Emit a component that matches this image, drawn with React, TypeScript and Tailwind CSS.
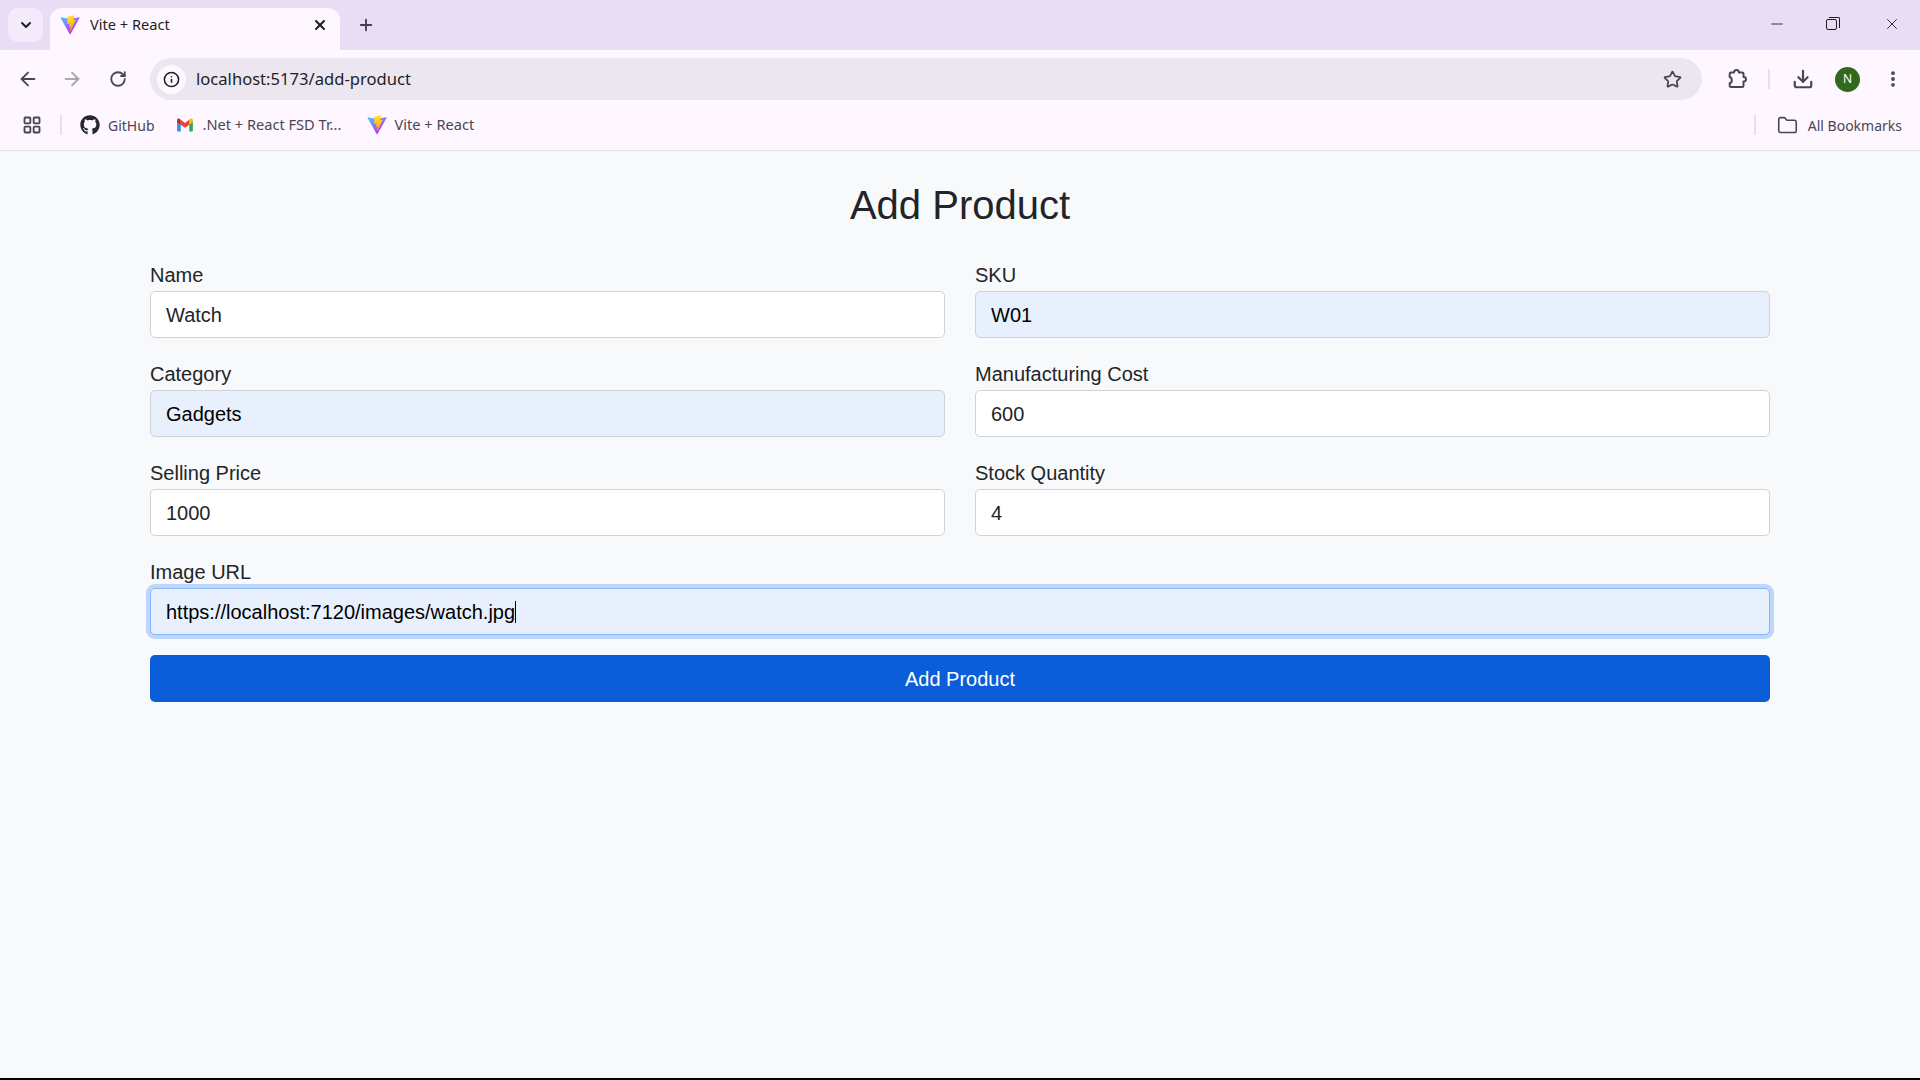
import React from "react";
import { ArrowLeft, ArrowRight, ChevronDown, Download, Folder, Info, LayoutGrid, Minus, MoreVertical, Plus, RotateCw, Star, X } from "lucide-react";
import { FaGithub } from "react-icons/fa";

const ViteLogo = ({ id }: { id: string }) => (
  <svg width="20" height="20" viewBox="0 0 410 404" fill="none">
    <path d="M399.6 59.5 215.9 388.2c-3.8 6.8-13.5 6.8-17.4.1L11.2 59.5c-4.2-7.4 2.1-16.3 10.4-14.8l183.9 32.9c1.2.2 2.4.2 3.5 0l180-32.8c8.3-1.5 14.7 7.3 10.6 14.7Z" fill={`url(#${id}a)`} />
    <path d="M292.9 1.6 156.9 28.2c-2.2.4-3.9 2.3-4 4.6l-8.4 141.1c-.2 3.3 2.9 5.9 6.1 5.1l37.9-8.7c3.5-.8 6.7 2.3 6 5.9l-11.3 55.1c-.8 3.7 2.7 6.9 6.3 5.8l23.4-7.1c3.6-1.1 7.1 2.1 6.3 5.8l-17.9 86.5c-1.1 5.4 6.1 8.4 9.1 3.7l2-3.1 110.9-221.3c1.9-3.7-1.3-7.9-5.4-7.1l-39 7.5c-3.7.7-6.8-2.7-5.7-6.3l25.4-88.2c1.1-3.6-2.1-7-5.8-6.3Z" fill={`url(#${id}b)`} />
    <defs>
      <linearGradient id={`${id}a`} x1="6" y1="33" x2="235" y2="344" gradientUnits="userSpaceOnUse">
        <stop stopColor="#41D1FF" />
        <stop offset="1" stopColor="#BD34FE" />
      </linearGradient>
      <linearGradient id={`${id}b`} x1="194" y1="8" x2="236" y2="293" gradientUnits="userSpaceOnUse">
        <stop stopColor="#FFEA83" />
        <stop offset=".08" stopColor="#FFDD35" />
        <stop offset="1" stopColor="#FFA800" />
      </linearGradient>
    </defs>
  </svg>
);

const GmailLogo = () => (
  <svg width="18" height="18" viewBox="0 0 24 24">
    <path d="M1.5 5.6v13.7c0 .7.6 1.2 1.2 1.2h3.6v-9l-4.8-5.9Z" fill="#4285F4" />
    <path d="M22.5 5.6v13.7c0 .7-.6 1.2-1.2 1.2h-3.6v-9l4.8-5.9Z" fill="#34A853" />
    <path d="M17.7 4.9v6.6l4.8-3.6V5.4c0-2-2.3-3.1-3.8-1.3l-1 .8Z" fill="#FBBC04" />
    <path d="M6.3 11.5V4.9L12 9.2l5.7-4.3v6.6L12 15.8l-5.7-4.3Z" fill="#EA4335" />
    <path d="M1.5 5.4v2.5l4.8 3.6V4.9l-1-.8C3.8 2.3 1.5 3.4 1.5 5.4Z" fill="#C5221F" />
  </svg>
);

// chrome's extension icon, lucide's puzzle has too many bumps
const ExtensionIcon = () => (
  <svg className="ml-[24px] w-[22px] h-[22px]" viewBox="0 0 22 22" fill="none" stroke="currentColor" strokeWidth="2" strokeLinejoin="round">
    <path d="M8 4.5c0-1.500 1-2.500 2.500-2.500S13 3 13 4.500h3.200c.8 0 1.300.5 1.300 1.300V9c1.600 0 2.500 1 2.500 2.200s-.9 2.200-2.500 2.200v4.300c0 .8-.5 1.300-1.300 1.300H5c-.8 0-1.300-.5-1.300-1.300v-2.500c1.400-.3 2.100-1.300 2.100-2.800S5.100 9.300 3.700 9V5.800c0-.8.500-1.300 1.300-1.300h3Z" />
  </svg>
);

const fields = [
  { label: "Name", value: "Watch", filled: false },
  { label: "SKU", value: "W01", filled: true },
  { label: "Category", value: "Gadgets", filled: true },
  { label: "Manufacturing Cost", value: "600", filled: false },
  { label: "Selling Price", value: "1000", filled: false },
  { label: "Stock Quantity", value: "4", filled: false },
];

const App = () => {
  return (
    <div className="h-[1080px] w-[1920px] flex flex-col overflow-hidden bg-[#f8f9fa] font-['Liberation_Sans',Arial,sans-serif] text-[#212529]">
      {/* Tab strip */}
      <div className="h-[50px] flex bg-[#e9ddf5] text-[#1f1f1f] shrink-0">
        <div className="ml-[8px] mt-[8px] w-[35px] h-[34px] rounded-[10px] bg-[#f3ebfb] flex items-center justify-center">
          <ChevronDown className="w-[16px] h-[16px]" strokeWidth={3} />
        </div>
        <div className="relative ml-[7px] mt-[8px] w-[290px] h-[42px] rounded-t-[12px] bg-[#fef7ff] flex items-center pl-[10px] pb-[8px]">
          <ViteLogo id="tab" />
          <span className="ml-[10px] text-[14.6px] font-['Noto_Sans',sans-serif]">Vite + React</span>
          <X className="absolute left-[262px] top-[9px] w-[16px] h-[16px]" strokeWidth={3} />
        </div>
        <div className="ml-[17px] mt-[16px] w-[18px] h-[18px]">
          <Plus className="w-[18px] h-[18px] text-[#45404e]" strokeWidth={2.5} />
        </div>
        <div className="ml-auto flex mt-[15px] h-[18px]">
          <div className="w-[18px] mr-[40px]"><Minus className="w-[18px] h-[18px]" strokeWidth={1.2} /></div>
          <div className="relative w-[14px] h-[14px] mr-[43px] mt-[2px]">
            <div className="absolute left-0 top-[2px] w-[11px] h-[11px] border border-[#1f1f1f] rounded-[2px]" />
            <div className="absolute left-[3px] top-0 w-[11px] h-[11px] border-t border-r border-[#1f1f1f] rounded-tr-[2px]" />
          </div>
          <div className="w-[18px] mr-[19px]"><X className="w-[18px] h-[18px]" strokeWidth={1.2} /></div>
        </div>
      </div>

      {/* Toolbar */}
      <div className="h-[58px] flex items-center bg-[#fef7ff] rounded-t-[10px] shrink-0 text-[#4a4553]">
        <ArrowLeft className="ml-[17px] w-[22px] h-[22px]" strokeWidth={2} />
        <ArrowRight className="ml-[22px] w-[22px] h-[22px] text-[#a9a6ad]" strokeWidth={2} />
        <RotateCw className="ml-[26px] w-[18px] h-[18px]" strokeWidth={2.4} />
        <div className="ml-[23px] w-[1552px] h-[42px] rounded-full bg-[#ece6f0] flex items-center pl-[7px]">
          <div className="w-[29px] h-[29px] rounded-full bg-[#fef7ff] flex items-center justify-center">
            <Info className="w-[17px] h-[17px] text-[#1f1f1f]" strokeWidth={2.2} />
          </div>
          <span className="ml-[10px] text-[16.6px] text-[#1f1f1f] font-['Noto_Sans',sans-serif]">localhost:5173/add-product</span>
          <Star className="ml-auto mr-[20px] w-[19px] h-[19px]" strokeWidth={2.2} />
        </div>
        <ExtensionIcon />
        <div className="ml-[20px] w-[2px] h-[20px] bg-[#e9ddf5]" />
        <Download className="ml-[22px] w-[22px] h-[22px]" strokeWidth={2.4} />
        <div className="ml-[21px] w-[25px] h-[25px] rounded-full bg-[#33691e] text-white text-[12px] flex items-center justify-center font-['Noto_Sans',sans-serif]">N</div>
        <MoreVertical className="ml-[23px] w-[20px] h-[20px]" strokeWidth={2.6} />
      </div>

      {/* Bookmarks bar */}
      <div className="h-[43px] pb-[8px] flex items-center bg-[#fef7ff] border-b border-[#e3e1e8] shrink-0 text-[14px] text-[#4a4553] font-['Noto_Sans',sans-serif]">
        <LayoutGrid className="ml-[22px] w-[20px] h-[20px]" strokeWidth={2.2} />
        <div className="ml-[18px] w-[2px] h-[20px] bg-[#e9ddf5]" />
        <FaGithub className="ml-[18px] w-[20px] h-[20px] text-[#24292f]" />
        <span className="ml-[8px]">GitHub</span>
        <div className="ml-[21px]"><GmailLogo /></div>
        <span className="ml-[9px] w-[139px] whitespace-nowrap text-[14.6px]">.Net + React FSD Tr...</span>
        <div className="ml-[25px]"><ViteLogo id="bm" /></div>
        <span className="ml-[8px] text-[14.6px]">Vite + React</span>
        <div className="ml-auto w-[2px] h-[20px] bg-[#e9ddf5]" />
        <Folder className="ml-[21px] w-[21px] h-[21px]" strokeWidth={1.8} />
        <span className="ml-[10px] mr-[18px]">All Bookmarks</span>
      </div>

      {/* Page */}
      <div className="flex-1 px-[150px] min-h-0">
        <h2 className="mt-[30px] mb-[32px] text-center text-[40px] leading-[48px] font-normal">Add Product</h2>
        <form className="grid grid-cols-2 gap-x-[30px]">
          {fields.map((field) => (
            <div key={field.label} className="mb-[22px]">
              <label className="block h-[30px] pt-[2px] text-[20px] leading-[24px]">{field.label}</label>
              <input
                readOnly
                value={field.value}
                className={`block w-full h-[47px] px-[15px] pt-[1px] text-[20px] border border-[#ced4da] rounded-[5px] outline-none ${
                  field.filled ? "bg-[#e8f0fe] text-black" : "bg-white text-[#212529]"
                }`}
              />
            </div>
          ))}
          <div className="col-span-2 mb-[20px]">
            <label className="block h-[30px] pt-[2px] text-[20px] leading-[24px]">Image URL</label>
            <div className="h-[47px] flex items-center px-[15px] text-[20px] text-black bg-[#e8f0fe] border border-[#86b7fe] rounded-[5px] shadow-[0_0_0_4px_rgba(13,110,253,0.25)]">
              <span>https://localhost:7120/images/watch.jpg</span>
              <span className="w-px h-[22px] bg-black" />
            </div>
          </div>
          <button type="button" className="col-span-2 h-[47px] bg-[#0b5ed7] text-white text-[20px] rounded-[5px]">
            Add Product
          </button>
        </form>
      </div>
      <div className="h-[2px] bg-black shrink-0" />
    </div>
  );
};

export default App;
